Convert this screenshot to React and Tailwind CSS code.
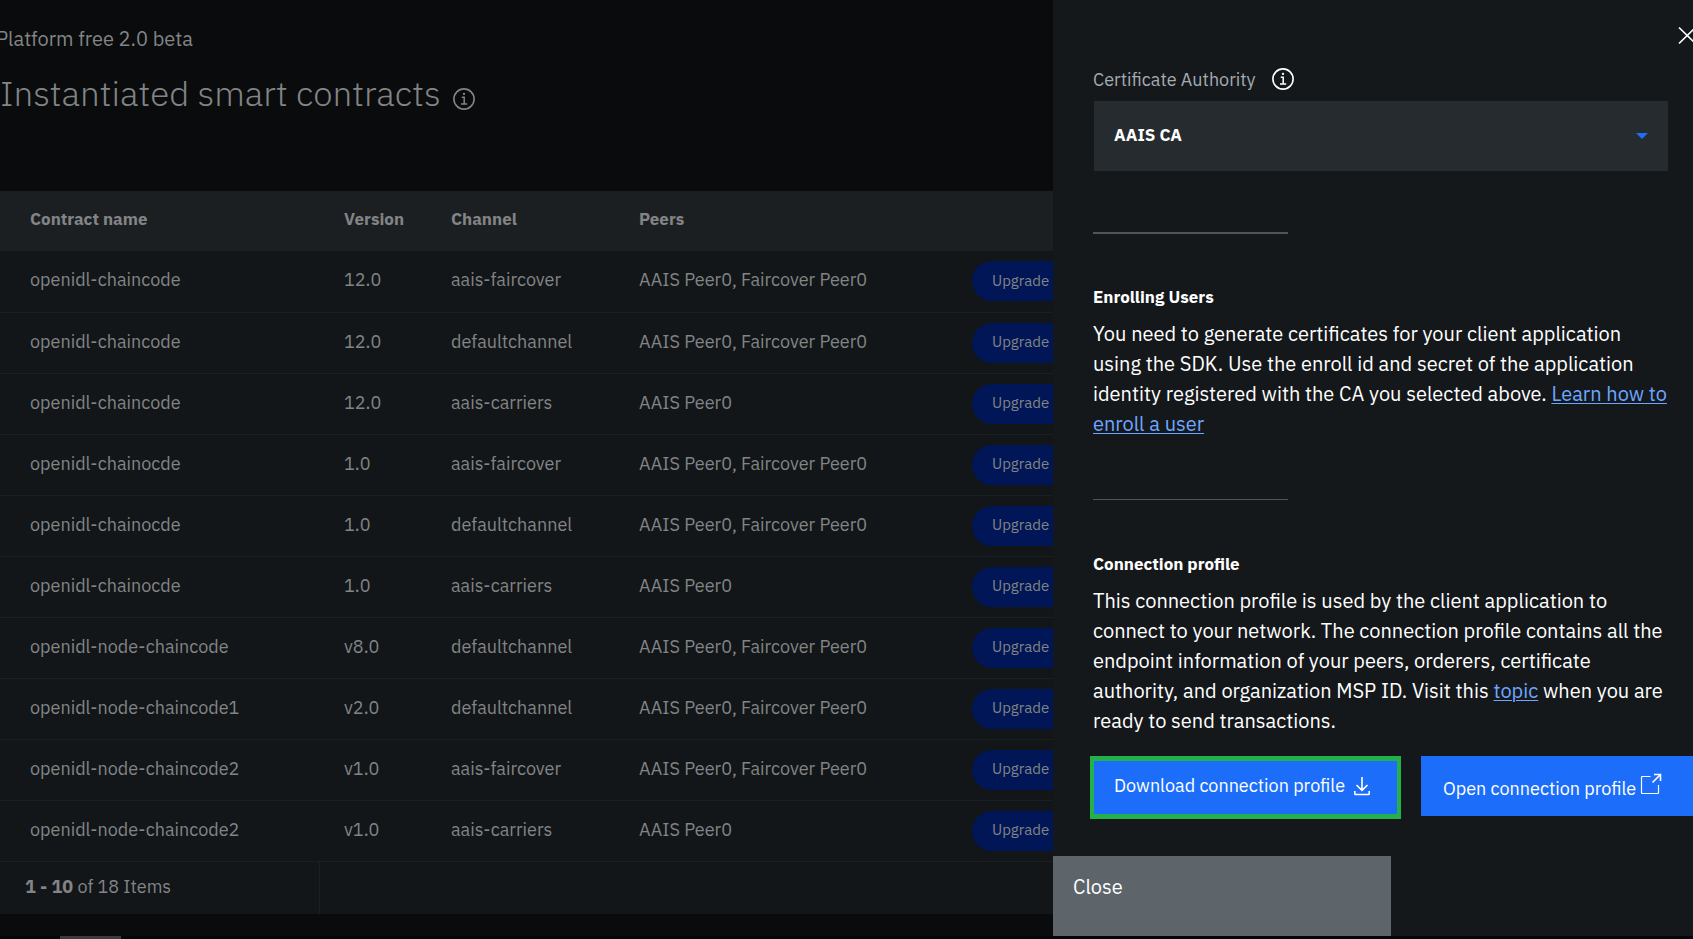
import React from 'react';

const rows = [
  ['openidl-chaincode', '12.0', 'aais-faircover', 'AAIS Peer0, Faircover Peer0'],
  ['openidl-chaincode', '12.0', 'defaultchannel', 'AAIS Peer0, Faircover Peer0'],
  ['openidl-chaincode', '12.0', 'aais-carriers', 'AAIS Peer0'],
  ['openidl-chainocde', '1.0', 'aais-faircover', 'AAIS Peer0, Faircover Peer0'],
  ['openidl-chainocde', '1.0', 'defaultchannel', 'AAIS Peer0, Faircover Peer0'],
  ['openidl-chainocde', '1.0', 'aais-carriers', 'AAIS Peer0'],
  ['openidl-node-chaincode', 'v8.0', 'defaultchannel', 'AAIS Peer0, Faircover Peer0'],
  ['openidl-node-chaincode1', 'v2.0', 'defaultchannel', 'AAIS Peer0, Faircover Peer0'],
  ['openidl-node-chaincode2', 'v1.0', 'aais-faircover', 'AAIS Peer0, Faircover Peer0'],
  ['openidl-node-chaincode2', 'v1.0', 'aais-carriers', 'AAIS Peer0'],
];

function InfoIcon({ className }) {
  return (
    <svg viewBox="0 0 22 22" className={className} fill="none" stroke="currentColor" aria-hidden="true">
      <circle cx="11" cy="11" r="10.1" strokeWidth="1.6" />
      <path d="M8.8 9.2h2.4v6.6M8 16h6.2" strokeWidth="1.5" />
      <circle cx="11" cy="5.9" r="1.15" fill="currentColor" stroke="none" />
    </svg>
  );
}

function DownloadIcon() {
  return (
    <svg viewBox="0 0 18 20" className="h-5 w-[18px]" fill="none" stroke="currentColor" strokeWidth="1.6" aria-hidden="true">
      <path d="M9 1v13M3.500 9L9 14.300l5.500-5.300M1.800 15v2.700q0 .8.800.8h12.800q.8 0 .8-.8V15" />
    </svg>
  );
}

function LaunchIcon() {
  return (
    <svg viewBox="0 0 22 22" className="mb-1 h-[22px] w-[22px]" fill="none" stroke="currentColor" aria-hidden="true">
      <path d="M10.500 3.500H2.300q-.8 0-.8.8V19.700q0 .8.800.8H17.700q.8 0 .8-.8V12" strokeWidth="1.2" />
      <path d="M14 1.500h6.500V8M20.500 1.500l-8 8" strokeWidth="1.6" />
    </svg>
  );
}

function ContractsTable() {
  return (
    <table className="w-[1240px] table-fixed border-collapse bg-[#121619] text-left text-lg text-[#828485]">
      <colgroup>
        <col className="w-[344px]" />
        <col className="w-[107px]" />
        <col className="w-[188px]" />
        <col className="w-[333px]" />
        <col />
      </colgroup>
      <thead>
        <tr className="h-[60px] bg-[#1c1f22] text-[17px]">
          <th className="pb-1 pl-[30px] font-bold">Contract name</th>
          <th className="pb-1 font-bold">Version</th>
          <th className="pb-1 font-bold">Channel</th>
          <th className="pb-1 font-bold">Peers</th>
          <th aria-label="Actions" />
        </tr>
      </thead>
      <tbody>
        {rows.map(([name, version, channel, peers], i) => (
          <tr key={i} className="h-[61px] border-b border-[#1b1f22]">
            <td className="pb-0.5 pl-[30px]">{name}</td>
            <td className="pb-0.5">{version}</td>
            <td className="pb-0.5">{channel}</td>
            <td className="pb-0.5">{peers}</td>
            <td>
              <button type="button" className="flex h-10 w-[100px] items-center rounded-full bg-[#001656] pb-0.5 pl-5 text-[15px]">
                Upgrade
              </button>
            </td>
          </tr>
        ))}
      </tbody>
    </table>
  );
}

function Drawer() {
  return (
    <aside className="flex w-[640px] shrink-0 flex-col overflow-hidden bg-[#14181b] text-white">
      <div className="flex h-[68px] items-start justify-end pt-[25px]">
        <button type="button" aria-label="Close panel" className="-mr-1">
          <svg viewBox="0 0 20 20" className="h-5 w-5" fill="none" stroke="currentColor" strokeWidth="1.700" aria-hidden="true">
            <path d="M2 2.500l16.500 16M18.500 2.500L2 18.500" />
          </svg>
        </button>
      </div>
      <div className="pr-[25px] pl-10">
        <div className="flex items-start gap-4 text-lg leading-6 text-[#a5abb2]">
          <label htmlFor="ca">Certificate Authority</label>
          <InfoIcon className="h-[22px] w-[22px] text-white" />
        </div>
        <div className="relative mt-[9px] ml-px">
          <select id="ca" className="h-[70px] w-full appearance-none bg-[#262b2f] pr-12 pl-5 text-[17px] font-bold">
            <option>AAIS CA</option>
          </select>
          <svg viewBox="0 0 12 6" className="pointer-events-none absolute top-8 right-5 h-[6px] w-3 fill-[#1c6efa]" aria-hidden="true">
            <path d="M0 0h12L6 6z" />
          </svg>
        </div>
        <hr className="mt-[61px] w-[195px] border-t-2 border-[#4f5458]" />
        <h2 className="mt-[51px] text-[17px] leading-6 font-bold">Enrolling Users</h2>
        <p className="mt-2.5 text-xl leading-[30px]">
          You need to generate certificates for your client application using the SDK. Use the enroll id and secret of
          the application identity registered with the CA you selected above.{' '}
          <a href="#enroll" className="text-[#6ea6ff] underline decoration-1 underline-offset-2">Learn how to enroll a user</a>
        </p>
        <hr className="mt-[60px] w-[195px] border-t border-[#4f5458]" />
        <h2 className="mt-[52px] text-[17px] leading-6 font-bold">Connection profile</h2>
        <p className="mt-2.5 text-xl leading-[30px]">
          This connection profile is used by the client application to connect to your network. The connection profile
          contains all the endpoint information of your peers, orderers, certificate authority, and organization MSP
          ID. Visit this <a href="#topic" className="text-[#6ea6ff] underline decoration-1 underline-offset-2">topic</a> when you are
          ready to send transactions.
        </p>
      </div>
      <div className="mt-5 flex items-start gap-5 pl-[37px] text-lg">
        <button type="button" className="flex h-[63px] w-[311px] shrink-0 items-center gap-2 border-4 border-y-5 border-[#24b14c] bg-[#1c6efa] pb-1 pl-5">
          Download connection profile
          <DownloadIcon />
        </button>
        <button type="button" className="flex h-[60px] w-[290px] shrink-0 items-center gap-1 bg-[#1c6efa] pl-[22px]">
          <span className="pt-1.5">Open connection profile</span>
          <LaunchIcon />
        </button>
      </div>
      <button type="button" className="mt-[37px] flex h-20 w-[338px] items-start bg-[#5d646a] pt-4 pl-5 text-xl leading-[30px]">
        Close
      </button>
    </aside>
  );
}

export default function App() {
  return (
    <div className="flex min-h-screen flex-col overflow-hidden bg-[#05060b] font-['IBM_Plex_Sans',Roboto,sans-serif]">
      <div className="flex">
        <main className="min-w-0 flex-1 overflow-hidden bg-[#090b0c] text-[#828485]">
          <div className="h-[191px] pt-6 whitespace-nowrap">
            <p className="-ml-1 text-xl leading-[30px]">Platform free 2.0 beta</p>
            <h1 className="mt-[15px] flex items-center gap-3 text-[35px] leading-12 font-light">
              Instantiated smart contracts
              <InfoIcon className="mt-3 h-[22px] w-[22px]" />
            </h1>
          </div>
          <ContractsTable />
          <div className="flex h-[52px] w-[1240px] bg-[#121619] text-lg">
            <p className="w-80 border-r border-[#1b1f22] pt-[11px] pl-[25px]">
              <b>1 - 10</b> of 18 Items
            </p>
          </div>
        </main>
        <Drawer />
      </div>
      <div className="flex-1 pl-[60px]">
        <div className="h-[3px] w-[61px] bg-[#3b3b3f]" />
      </div>
    </div>
  );
}
